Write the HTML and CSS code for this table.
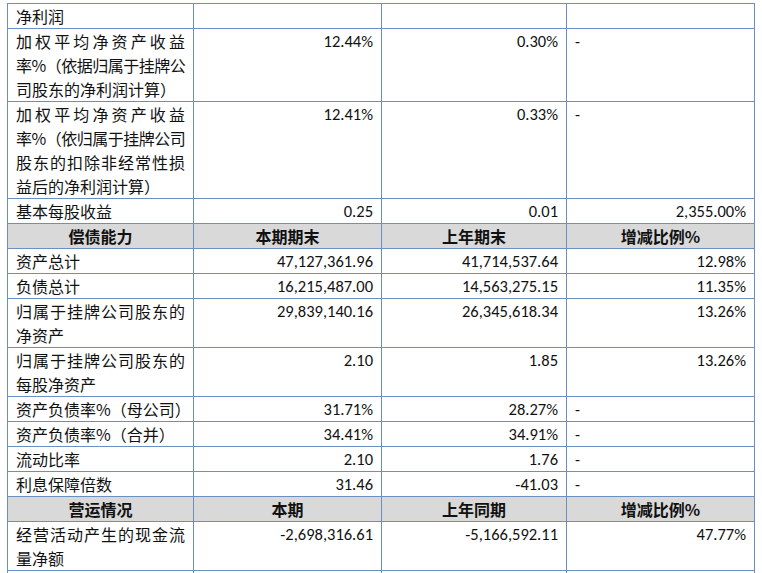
FILE: index.html
```html
<!DOCTYPE html>
<html lang="zh-CN">
<head>
<meta charset="utf-8">
<title>主要财务数据</title>
<link rel="stylesheet" href="styles.css">
</head>
<body>
<div class="page">
<table class="fin">
  <colgroup>
    <col class="c1"><col class="c2"><col class="c3"><col class="c4">
  </colgroup>
  <tbody>
    <tr>
      <td class="lab"><span class="l">净利润</span></td>
      <td class="num"></td><td class="num"></td><td class="num"></td>
    </tr>
    <tr>
      <td class="lab"><span class="j">加权平均净资产收益</span><span class="j t">率%（依据归属于挂牌公</span><span class="l">司股东的净利润计算）</span></td>
      <td class="num">12.44%</td><td class="num">0.30%</td><td class="dash">-</td>
    </tr>
    <tr>
      <td class="lab"><span class="j">加权平均净资产收益</span><span class="j t">率%（依归属于挂牌公司</span><span class="j">股东的扣除非经常性损</span><span class="l">益后的净利润计算）</span></td>
      <td class="num">12.41%</td><td class="num">0.33%</td><td class="dash">-</td>
    </tr>
    <tr>
      <td class="lab"><span class="l">基本每股收益</span></td>
      <td class="num">0.25</td><td class="num">0.01</td><td class="num">2,355.00%</td>
    </tr>
    <tr class="head">
      <th>偿债能力</th><th>本期期末</th><th>上年期末</th><th>增减比例%</th>
    </tr>
    <tr>
      <td class="lab"><span class="l">资产总计</span></td>
      <td class="num">47,127,361.96</td><td class="num">41,714,537.64</td><td class="num">12.98%</td>
    </tr>
    <tr>
      <td class="lab"><span class="l">负债总计</span></td>
      <td class="num">16,215,487.00</td><td class="num">14,563,275.15</td><td class="num">11.35%</td>
    </tr>
    <tr>
      <td class="lab"><span class="j">归属于挂牌公司股东的</span><span class="l">净资产</span></td>
      <td class="num">29,839,140.16</td><td class="num">26,345,618.34</td><td class="num">13.26%</td>
    </tr>
    <tr>
      <td class="lab"><span class="j">归属于挂牌公司股东的</span><span class="l">每股净资产</span></td>
      <td class="num">2.10</td><td class="num">1.85</td><td class="num">13.26%</td>
    </tr>
    <tr>
      <td class="lab"><span class="l">资产负债率%（母公司）</span></td>
      <td class="num">31.71%</td><td class="num">28.27%</td><td class="dash">-</td>
    </tr>
    <tr>
      <td class="lab"><span class="l">资产负债率%（合并）</span></td>
      <td class="num">34.41%</td><td class="num">34.91%</td><td class="dash">-</td>
    </tr>
    <tr>
      <td class="lab"><span class="l">流动比率</span></td>
      <td class="num">2.10</td><td class="num">1.76</td><td class="dash">-</td>
    </tr>
    <tr>
      <td class="lab"><span class="l">利息保障倍数</span></td>
      <td class="num">31.46</td><td class="num">-41.03</td><td class="dash">-</td>
    </tr>
    <tr class="head">
      <th>营运情况</th><th>本期</th><th>上年同期</th><th>增减比例%</th>
    </tr>
    <tr>
      <td class="lab"><span class="j">经营活动产生的现金流</span><span class="l">量净额</span></td>
      <td class="num">-2,698,316.61</td><td class="num">-5,166,592.11</td><td class="num">47.77%</td>
    </tr>
    <tr>
      <td class="lab"></td>
      <td class="num"></td><td class="num"></td><td class="num"></td>
    </tr>
  </tbody>
</table>
</div>
</body>
</html>
```
FILE: styles.css
```css
html, body {
  margin: 0;
  padding: 0;
  background: #ffffff;
  overflow: hidden;
}

.page {
  padding: 3px 0 0 7px;
  height: 573px;
  box-sizing: border-box;
  overflow: hidden;
}

.fin {
  border-collapse: collapse;
  table-layout: fixed;
  width: 747px;
  color: #111111;
  font-family: "Noto Sans CJK SC", "Noto Sans", sans-serif;
  font-size: 16px;
}

.c1 { width: 186px; }
.c2 { width: 188px; }
.c3 { width: 185px; }
.c4 { width: 188px; }

.fin td,
.fin th {
  border: 1px solid #6a8fc1;
  padding: 0 8px;
  line-height: 24px;
  height: 24px;
  vertical-align: top;
}

.lab .j {
  display: block;
  text-align: justify;
  text-align-last: justify;
  white-space: nowrap;
}

.lab .t {
  letter-spacing: -0.5px;
}

.lab .l {
  display: block;
  white-space: nowrap;
}

.num {
  text-align: right;
  font-family: "Carlito", "Open Sans", sans-serif;
  font-size: 16.5px;
}

.dash {
  text-align: left;
  font-family: "Carlito", "Open Sans", sans-serif;
  font-size: 16.5px;
  padding-left: 10px;
}

.head th {
  background: #d9d9d9;
  font-weight: 700;
  text-align: center;
  font-size: 16px;
}
```
